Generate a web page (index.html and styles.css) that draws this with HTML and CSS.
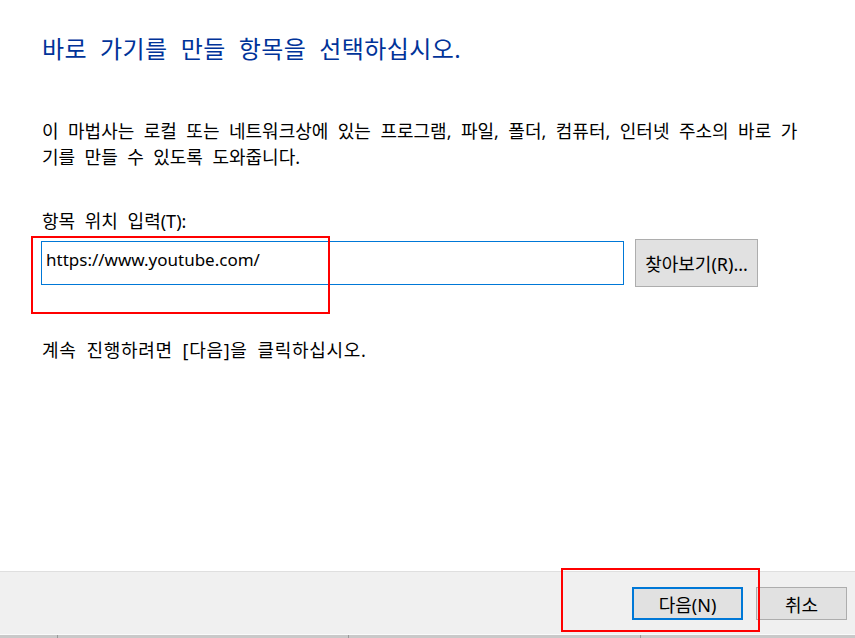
FILE: index.html
```html
<!DOCTYPE html>
<html lang="ko">
<head>
<meta charset="utf-8">
<title>바로 가기 만들기</title>
<link rel="stylesheet" href="styles.css">
</head>
<body>
<div class="page">
  <main class="content">
    <h1 class="title">바로 가기를 만들 항목을 선택하십시오.</h1>
    <p class="desc">이 마법사는 로컬 또는 네트워크상에 있는 프로그램, 파일, 폴더, 컴퓨터, 인터넷 주소의 바로 가<br>기를 만들 수 있도록 도와줍니다.</p>
    <label class="label" for="loc">항목 위치 입력(T):</label>
    <div class="row">
      <div class="field-wrap">
        <input id="loc" class="field" type="text" value="https://www.youtube.com/">
        <div class="mark mark-field"></div>
      </div>
      <button class="btn browse">찾아보기(R)...</button>
    </div>
    <p class="hint">계속 진행하려면 [다음]을 클릭하십시오.</p>
  </main>
  <footer class="footer">
    <div class="next-wrap">
      <button class="btn next">다음(N)</button>
      <div class="mark mark-next"></div>
    </div>
    <button class="btn cancel">취소</button>
  </footer>
  <div class="strip">
    <span class="seg s1"></span>
    <span class="seg s2"></span>
    <span class="seg s3"></span>
    <span class="seg s4"></span>
  </div>
</div>
</body>
</html>
```

FILE: styles.css
```css
* { box-sizing: border-box; }
html, body { margin: 0; padding: 0; background: #fff; }
body {
  font-family: "Noto Sans", "Noto Sans CJK KR", sans-serif;
  color: #000;
  width: 855px;
  height: 638px;
  overflow: hidden;
}
.page {
  display: flex;
  flex-direction: column;
  height: 638px;
}
.content {
  flex: 1;
  display: flex;
  flex-direction: column;
  padding: 0 0 0 42px;
}
.title {
  margin: 32px 0 0 0;
  font-size: 24px;
  font-weight: normal;
  line-height: 34px;
  color: #003399;
  word-spacing: 6.5px;
  letter-spacing: 0.4px;
}
.desc {
  margin: 52px 0 0 0;
  font-size: 18px;
  line-height: 26px;
  word-spacing: 4.8px;
}
.label {
  margin-top: 38px;
  font-size: 18px;
  line-height: 26px;
  word-spacing: 5px;
}
.row {
  display: flex;
  align-items: center;
  margin-top: 5px;
  margin-left: -1px;
}
.field-wrap {
  position: relative;
  width: 583px;
  height: 44px;
}
.field {
  width: 583px;
  height: 44px;
  border: 1px solid #0078d7;
  padding: 0 4px 7px 4px;
  font-family: inherit;
  font-size: 17px;
  color: #000;
  outline: none;
  background: #fff;
}
.mark {
  position: absolute;
  border: 2px solid #ff0000;
  pointer-events: none;
}
.mark-field {
  left: -10px;
  top: -5px;
  width: 299px;
  height: 78px;
}
.btn {
  font-family: inherit;
  font-size: 18px;
  color: #000;
  background: #e1e1e1;
  border: 1px solid #adadad;
  padding: 0;
  margin: 0;
}
.browse {
  margin-left: 11px;
  width: 123px;
  height: 48px;
}
.hint {
  margin: 50px 0 0 0;
  font-size: 18px;
  line-height: 26px;
  word-spacing: 4.5px;
  letter-spacing: 0.7px;
}
.footer {
  height: 63px;
  background: #f0f0f0;
  border-top: 1px solid #dfdfdf;
  display: flex;
  align-items: flex-start;
  justify-content: flex-end;
  padding: 15px 8px 0 0;
}
.next-wrap {
  position: relative;
}
.next {
  width: 111px;
  height: 33px;
  border: 2px solid #0078d7;
}
.mark-next {
  left: -71px;
  top: -19px;
  width: 199px;
  height: 64px;
}
.cancel {
  margin-left: 13px;
  width: 91px;
  height: 33px;
}
.strip {
  height: 4px;
  display: flex;
  border-top: 1px solid #fafafa;
  background: #c9c9c9;
}
.seg {
  height: 100%;
  border-right: 1px solid #9a9a9a;
}
.s1 { width: 58px; }
.s2 { width: 291px; }
.s3 { width: 292px; }
.s4 { flex: 1; border-right: 0; }
```
